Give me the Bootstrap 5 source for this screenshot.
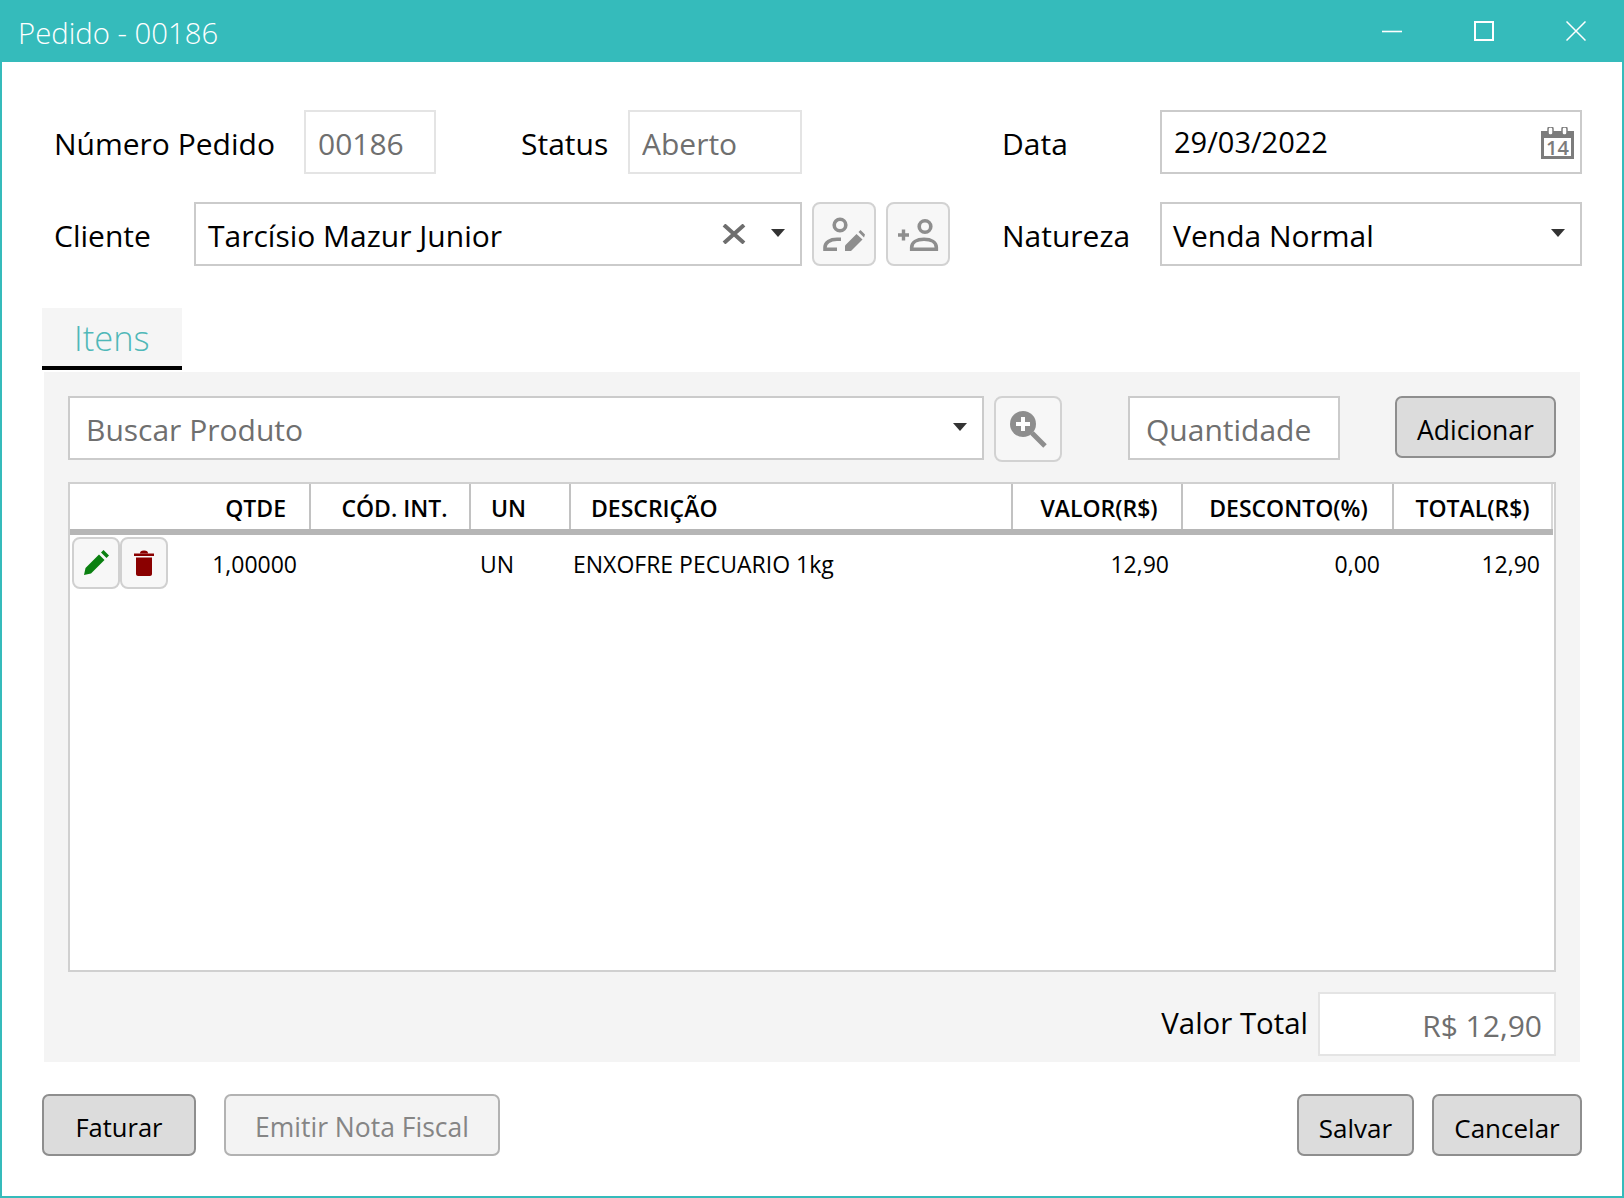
<!DOCTYPE html>
<html lang="pt-BR">
<head>
<meta charset="utf-8">
<title>Pedido - 00186</title>
<link href="https://cdn.jsdelivr.net/npm/bootstrap@5.3.0/dist/css/bootstrap.min.css" rel="stylesheet">
<style>
body{margin:0;background:#fff;font-family:"Open Sans","Liberation Sans",sans-serif;color:#000;font-size:30px}
.pd-window{height:1198px;border:2px solid #35bbbb;border-top:0;display:flex;flex-direction:column}
.pd-title{height:62px;margin:0 -2px;background:#35bbbb;color:#fff;font-size:29.3px;font-weight:300;padding-left:18px;flex:none}
.pd-title-text{line-height:1;margin-top:5px}
.pd-winbtns{margin-left:auto;gap:0}
.pd-winbtn{display:block;flex:none}
.pd-min{margin-right:72px}
.pd-max{margin-right:72px}
.pd-close{margin-right:38px}
.pd-main{padding:48px 40px 0;flex:1;display:flex;flex-direction:column}
.pd-row{height:64px}
.pd-row+.pd-row{margin-top:28px}
.pd-lab{flex:none;line-height:1;white-space:nowrap;padding-top:4px}
.pd-l1{width:262px;padding-left:12px}
.pd-l2{width:192px;padding-left:85px}
.pd-l3{width:358px;padding-left:200px}
.pd-l4{width:152px;padding-left:12px}
.pd-l5{width:210px;padding-left:52px}
.pd-field.form-control{height:64px;border:2px solid #cbcbcb;border-radius:0;font-size:30px;line-height:1;padding:2px 12px 0;color:#000;background:#fff;box-shadow:none;flex:none}
.pd-field.pd-ro{border-color:#e4e4e4;color:#6f6f6f}
.pd-field::placeholder{color:#6f6f6f;opacity:1}
.pd-date{font-size:29px;margin-top:-6px}
.pd-nat{padding-left:11px!important}
.pd-w132{width:132px}
.pd-w174{width:174px}
.pd-w608{width:608px}
.pd-w422{width:422px}
.pd-w916{width:916px}
.pd-w212{width:212px;padding-left:16px!important}
.pd-w238{width:238px;text-align:right;padding-right:12px!important}
.pd-iconbtn.btn{flex:none;width:64px;height:64px;padding:0;border:2px solid #d2d2d2;border-radius:8px;background:#f7f7f7;display:flex;align-items:center;justify-content:center}
.pd-ml10{margin-left:10px}
.pd-tab{width:140px;height:62px;margin-top:42px;background:#f5f5f5;border-bottom:4px solid #000;color:#4fb8b8;font-size:34.5px;font-weight:300;padding-left:32px;line-height:60px;flex:none}
.pd-panel{margin:2px 2px 0;background:#f4f4f4;padding:24px 24px 6px;height:690px;flex:none}
.pd-search{height:66px}
.pd-search .pd-field{padding-left:16px}
.pd-ph{color:#6f6f6f}
.pd-search .pd-iconbtn.btn{width:68px;height:66px;margin-left:10px}
.pd-ml66{margin-left:66px}
.pd-btn.btn{flex:none;height:62px;background:#dcdcdc;border:2px solid #8e8e8e;border-radius:7px;color:#000;font-size:26px;line-height:1;padding:5px 0 0}
.pd-btn.btn:disabled{background:#f3f3f3;border-color:#b2b2b2;color:#858585;opacity:1}
.pd-add.btn{width:161px;margin-left:55px;font-size:26.5px;padding-top:6px}
.pd-fat.btn{width:154px;font-size:25.5px;padding-top:6px}
.pd-nf.btn{width:276px;margin-left:28px;font-size:26.5px}
.pd-sal{width:117px;margin-left:auto}
.pd-can{width:150px;margin-left:18px}
.pd-tablebox{height:490px;margin-top:20px;background:#fff;border:2px solid #d0d0d0;overflow:hidden}
.pd-table.table{table-layout:fixed;width:1482px;margin:0;font-size:23px;color:#000;--bs-table-bg:#fff}
.pd-table th{height:48px;padding:3px 0 0;font-weight:600;line-height:1;border-bottom:6px solid #b6b6b6;border-right:2px solid #c2c2c2;white-space:nowrap;vertical-align:middle;text-align:center;font-size:23px}
.pd-table th:first-child{border-right:0}
.pd-table td{padding:4px 0 0;border:0;height:58px;vertical-align:middle;line-height:1;white-space:nowrap}
.pd-table th.pd-nb{border-right:2px solid #d8d8d8}
.pd-table th.pd-thq{text-align:right;padding-right:23px}
.pd-table th.pd-thl{text-align:left;padding-left:20px}
.pd-table th.pd-thc{padding-left:9px}
.pd-table th.pd-thv{padding-left:4px}
.pd-table th.pd-thd{padding-left:2px}
.pd-table td.pd-tq{text-align:right;padding-right:13px}
.pd-table td.pd-tu{padding-left:10px}
.pd-table td.pd-td{padding-left:3px}
.pd-table td.pd-tn{text-align:right;padding-right:13px}
.pd-table td.pd-tl{text-align:right;padding-right:12px}
.pd-table td.pd-ta{padding:2px 0 0;vertical-align:top}
.pd-rowbtn.btn{width:48px;height:52px;padding:0;border:2px solid #d0d0d0;border-radius:8px;background:#f7f7f7;display:flex;align-items:center;justify-content:center;flex:none}
.pd-actions{padding-left:2px;gap:0}
.pd-total{height:64px;margin-top:20px;justify-content:flex-end}
.pd-total .pd-lab{margin-right:10px;margin-top:-4px;font-size:29.4px}
.pd-foot{height:62px;margin-top:32px}
.pd-caret{flex:none;display:block}
.pd-grow{flex:1;white-space:nowrap;padding-top:2px}
</style>
</head>
<body>
<div class="pd-window">
  <div class="pd-title d-flex align-items-center">
    <div class="pd-title-text">Pedido - 00186</div>
    <div class="pd-winbtns d-flex align-items-center">
      <svg class="pd-winbtn pd-min" width="20" height="20" viewBox="0 0 20 20"><path d="M0 10.500h20" stroke="#fff" stroke-width="1.600" fill="none"/></svg>
      <svg class="pd-winbtn pd-max" width="20" height="20" viewBox="0 0 20 20"><rect x="1" y="1" width="18" height="18" stroke="#fff" stroke-width="2" fill="none"/></svg>
      <svg class="pd-winbtn pd-close" width="20" height="20" viewBox="0 0 20 20"><path d="M0.500 0.500l19 19M19.500 0.500l-19 19" stroke="#fff" stroke-width="1.500" fill="none"/></svg>
    </div>
  </div>
  <div class="pd-main">
    <div class="pd-row d-flex align-items-center">
      <div class="pd-lab pd-l1">Número Pedido</div>
      <input class="form-control pd-field pd-ro pd-w132" value="00186" readonly>
      <div class="pd-lab pd-l2">Status</div>
      <input class="form-control pd-field pd-ro pd-w174" value="Aberto" readonly>
      <div class="pd-lab pd-l3">Data</div>
      <div class="form-control pd-field pd-w422 d-flex align-items-center">
        <span class="pd-grow pd-date">29/03/2022</span>
        <svg width="33" height="32" viewBox="0 0 33 32" class="pd-caret" style="margin-right:-6px"><path d="M0 4h33v28H0z" fill="#7c7c7c"/><rect x="3" y="11" width="27" height="18" fill="#fff"/><rect x="7" y="0" width="5" height="8" rx="2" fill="#fff" stroke="#7c7c7c" stroke-width="1.500"/><rect x="21" y="0" width="5" height="8" rx="2" fill="#fff" stroke="#7c7c7c" stroke-width="1.500"/><text x="16.500" y="27.500" text-anchor="middle" font-family="Open Sans" font-size="20" font-weight="600" fill="#7c7c7c">14</text></svg>
      </div>
    </div>
    <div class="pd-row d-flex align-items-center">
      <div class="pd-lab pd-l4">Cliente</div>
      <div class="form-control pd-field pd-w608 d-flex align-items-center">
        <span class="pd-grow">Tarcísio Mazur Junior</span>
        <svg width="24" height="20" viewBox="0 0 24 20" class="pd-caret" style="margin-top:-2px"><path d="M2 1l20 18M22 1L2 19" stroke="#6e6e6e" stroke-width="4" fill="none"/></svg>
        <svg width="14" height="8" viewBox="0 0 14 8" class="pd-caret" style="margin:-4px 3px 0 25px"><path d="M0 0h14L7 8z" fill="#333"/></svg>
      </div>
      <button class="btn pd-iconbtn pd-ml10" type="button" aria-label="Editar cliente">
        <svg width="42" height="34" viewBox="0 0 42 34"><circle cx="17" cy="8" r="5.800" fill="none" stroke="#8e8e8e" stroke-width="3.600"/><path d="M18 22.300h-4c-7 0-12 3-12 8v2h12" fill="none" stroke="#8e8e8e" stroke-width="3.600"/><path d="M22 34v-5.500L33.500 17l6 5.500L28 34z" fill="#8e8e8e"/><path d="M35.500 15l2-2 4.500 4.500-1 3z" fill="#8e8e8e"/></svg>
      </button>
      <button class="btn pd-iconbtn pd-ml10" type="button" aria-label="Novo cliente">
        <svg width="42" height="34" viewBox="0 0 42 34"><path d="M1 18h11M6.500 12.500v11" stroke="#8e8e8e" stroke-width="3.400" fill="none"/><circle cx="28" cy="9.500" r="5.800" fill="none" stroke="#8e8e8e" stroke-width="3.600"/><path d="M14.700 32.300v-2c0-5 5-8 12.300-8s12.300 3 12.300 8v2z" fill="none" stroke="#8e8e8e" stroke-width="3.600"/></svg>
      </button>
      <div class="pd-lab pd-l5">Natureza</div>
      <div class="form-control pd-field pd-nat pd-w422 d-flex align-items-center">
        <span class="pd-grow">Venda Normal</span>
        <svg width="14" height="8" viewBox="0 0 14 8" class="pd-caret" style="margin:-4px 3px 0 0"><path d="M0 0h14L7 8z" fill="#333"/></svg>
      </div>
    </div>
    <div class="pd-tab">Itens</div>
    <div class="pd-panel">
      <div class="pd-search d-flex align-items-start">
        <div class="form-control pd-field pd-w916 d-flex align-items-center">
          <span class="pd-grow pd-ph">Buscar Produto</span>
          <svg width="14" height="8" viewBox="0 0 14 8" class="pd-caret" style="margin:-4px 3px 0 0"><path d="M0 0h14L7 8z" fill="#333"/></svg>
        </div>
        <button class="btn pd-iconbtn" type="button" aria-label="Buscar">
          <svg width="38" height="38" viewBox="0 0 38 38"><circle cx="14" cy="14" r="13" fill="#8e8e8e"/><path d="M14 7v14M7 14h14" stroke="#fff" stroke-width="4" fill="none"/><path d="M23 23l13 13" stroke="#8e8e8e" stroke-width="5" fill="none"/></svg>
        </button>
        <input class="form-control pd-field pd-w212 pd-ml66" placeholder="Quantidade">
        <button class="btn pd-btn pd-add" type="button">Adicionar</button>
      </div>
      <div class="pd-tablebox">
        <table class="table pd-table">
          <colgroup>
            <col style="width:100px"><col style="width:140px"><col style="width:160px"><col style="width:100px"><col style="width:442px"><col style="width:170px"><col style="width:211px"><col style="width:159px">
          </colgroup>
          <thead>
            <tr>
              <th></th><th class="pd-thq">QTDE</th><th class="pd-thc">CÓD. INT.</th><th class="pd-thl">UN</th><th class="pd-thl">DESCRIÇÃO</th><th class="pd-thv">VALOR(R$)</th><th class="pd-thd">DESCONTO(%)</th><th class="pd-nb">TOTAL(R$)</th>
            </tr>
          </thead>
          <tbody>
            <tr>
              <td class="pd-ta">
                <div class="d-flex pd-actions">
                  <button class="btn pd-rowbtn" type="button" aria-label="Editar">
                    <svg width="26" height="26" viewBox="0 0 26 26"><path d="M1 25l1.500-7L16 4.500l5.500 5.500L8 23.500z" fill="#0a8010"/><path d="M18 2.500L20.500 0 26 5.500 23.500 8z" fill="#0a8010"/></svg>
                  </button>
                  <button class="btn pd-rowbtn" type="button" aria-label="Excluir">
                    <svg width="20" height="26" viewBox="0 0 20 26"><path d="M0 3.500h20v2.500H0z" fill="#8a0000"/><path d="M6 3.500c0-2 1-3 4-3s4 1 4 3z" fill="#8a0000"/><path d="M2 7.500h16v16.500c0 1-1 2-2 2H4c-1 0-2-1-2-2z" fill="#8a0000"/></svg>
                  </button>
                </div>
              </td>
              <td class="pd-tq">1,00000</td><td></td><td class="pd-tu">UN</td><td class="pd-td">ENXOFRE PECUARIO 1kg</td><td class="pd-tn">12,90</td><td class="pd-tn">0,00</td><td class="pd-tl">12,90</td>
            </tr>
          </tbody>
        </table>
      </div>
      <div class="pd-total d-flex align-items-center">
        <div class="pd-lab">Valor Total</div>
        <input class="form-control pd-field pd-ro pd-w238" value="R$ 12,90" readonly>
      </div>
    </div>
    <div class="pd-foot d-flex">
      <button class="btn pd-btn pd-fat" type="button">Faturar</button>
      <button class="btn pd-btn pd-nf" type="button" disabled>Emitir Nota Fiscal</button>
      <button class="btn pd-btn pd-sal" type="button">Salvar</button>
      <button class="btn pd-btn pd-can" type="button">Cancelar</button>
    </div>
  </div>
</div>
<script src="https://cdn.jsdelivr.net/npm/bootstrap@5.3.0/dist/js/bootstrap.bundle.min.js"></script>
</body>
</html>
